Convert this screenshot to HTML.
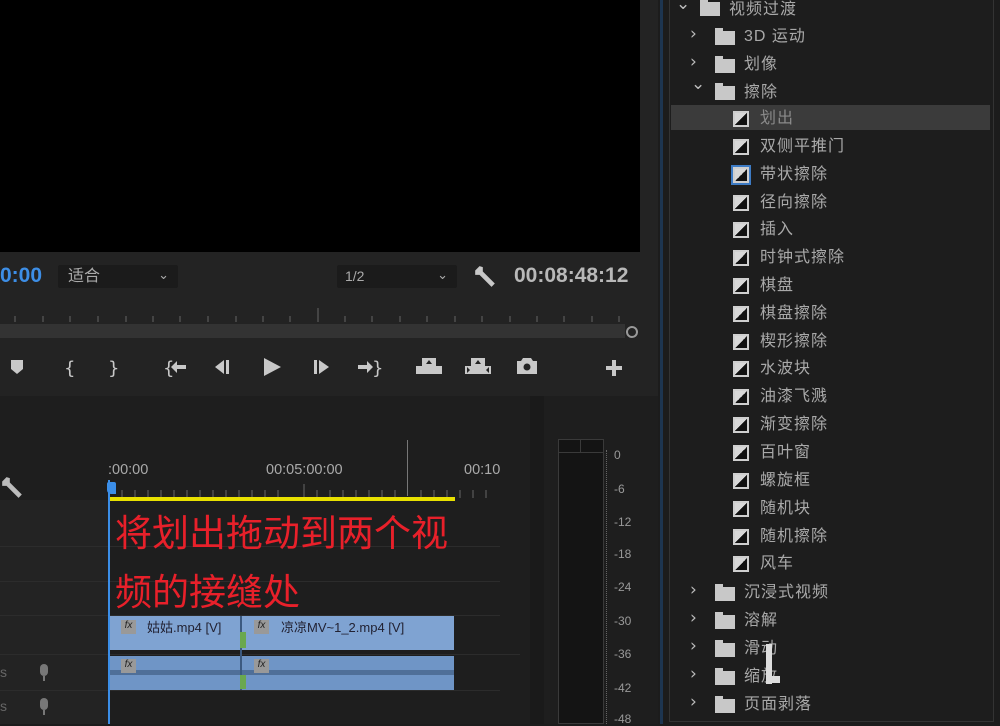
<!DOCTYPE html>
<html><head><meta charset="utf-8"><style>
*{margin:0;padding:0;box-sizing:border-box}
body{width:1000px;height:724px;overflow:hidden;background:#1c1c1c;position:relative;font-family:"Liberation Sans","Noto Sans CJK SC",sans-serif;color:#a8a8a8}
.a{position:absolute}
.row{position:absolute;height:28px;line-height:28px;font-size:16px;color:#a9a9a9;white-space:nowrap;letter-spacing:1px}
.ic{position:absolute;left:733px;width:16px;height:16px;border:2px solid #cfcfcf;background:linear-gradient(135deg,#d8d8d8 50%,#111 50%)}
.fd{position:absolute;width:20px;height:14px;background:#c8c8c8}
.fd:before{content:"";position:absolute;left:0;top:-3px;width:8px;height:3px;background:#c8c8c8}
.ch{position:absolute;font-size:17px;color:#bbb;font-family:"DejaVu Sans",sans-serif}
.lbl{position:absolute;left:614px;font-size:12px;color:#999}
</style></head><body>
<div class="a" style="left:0;top:0;width:658px;height:396px;background:#232323"></div>
<div class="a" style="left:0;top:0;width:640px;height:252px;background:#000"></div>
<div class="a" style="left:0;top:264px;font-size:21px;color:#3d8ee6;font-weight:bold">0:00</div>
<div class="a" style="left:58px;top:265px;width:120px;height:23px;background:#1b1b1b;border-radius:2px;font-size:16px;padding-left:10px;line-height:23px;color:#aaa">适合<span style="position:absolute;right:9px;top:-2px;font-size:13px">&#8964;</span></div>
<div class="a" style="left:337px;top:265px;width:120px;height:23px;background:#1b1b1b;border-radius:2px;font-size:14px;padding-left:8px;line-height:23px;color:#aaa">1/2<span style="position:absolute;right:9px;top:-2px;font-size:13px">&#8964;</span></div>
<svg class="a" style="left:473px;top:265px" width="24" height="24" viewBox="0 0 22 22"><path d="M2 5 L6 1 L9 2 L9 6 L20 17 L17 20 L6 9 L2 9 Z" fill="#c8c8c8"/></svg>
<div class="a" style="left:514px;top:264px;font-size:21px;font-weight:bold;color:#b8b8b8">00:08:48:12</div>
<div class="a" style="left:0;top:324px;width:625px;height:14px;background:#333"></div>
<svg class="a" style="left:0;top:306px" width="640" height="18">
<g stroke="#666" stroke-width="1">
<line x1="15" y1="10" x2="15" y2="16"/><line x1="43" y1="10" x2="43" y2="16"/><line x1="70" y1="10" x2="70" y2="16"/><line x1="98" y1="10" x2="98" y2="16"/><line x1="126" y1="10" x2="126" y2="16"/><line x1="153" y1="10" x2="153" y2="16"/><line x1="180" y1="10" x2="180" y2="16"/><line x1="208" y1="10" x2="208" y2="16"/><line x1="236" y1="10" x2="236" y2="16"/><line x1="263" y1="10" x2="263" y2="16"/><line x1="290" y1="10" x2="290" y2="16"/><line x1="318" y1="2" x2="318" y2="16"/><line x1="345" y1="10" x2="345" y2="16"/><line x1="372" y1="10" x2="372" y2="16"/><line x1="400" y1="10" x2="400" y2="16"/><line x1="427" y1="10" x2="427" y2="16"/><line x1="455" y1="10" x2="455" y2="16"/><line x1="482" y1="10" x2="482" y2="16"/><line x1="510" y1="10" x2="510" y2="16"/><line x1="537" y1="10" x2="537" y2="16"/><line x1="564" y1="10" x2="564" y2="16"/><line x1="592" y1="10" x2="592" y2="16"/><line x1="619" y1="10" x2="619" y2="16"/></g></svg>
<div class="a" style="left:626px;top:326px;width:12px;height:12px;border:2px solid #999;border-radius:50%"></div>
<svg class="a" style="left:0;top:352px" width="640" height="30" fill="#c8c8c8">
<path d="M11 8 H23 V17 L17 22 L11 17 Z"/>
<text x="64" y="22" font-size="18" fill="#c8c8c8" font-family="DejaVu Sans">{</text>
<text x="108" y="22" font-size="18" fill="#c8c8c8" font-family="DejaVu Sans">}</text>
<text x="163" y="22" font-size="18" fill="#c8c8c8" font-family="DejaVu Sans">{</text><path d="M171 15 L177 9 V13 H186 V17 H177 V21 Z"/>
<path d="M215 15 L224 8 V22 Z"/><rect x="226" y="8" width="3" height="14"/>
<path d="M264 6 L281 15 L264 24 Z"/>
<rect x="314" y="8" width="3" height="14"/><path d="M319 8 L329 15 L319 22 Z"/>
<path d="M358 13 H367 V9 L373 15 L367 21 V17 H358 Z"/><text x="372" y="22" font-size="18" fill="#c8c8c8" font-family="DejaVu Sans">}</text>
<path d="M422 6 H436 V14 H442 V22 H416 V14 H422 Z"/><path d="M426 12 L429 8 L432 12 Z" fill="#232323"/>
<path d="M471 6 H485 V14 H491 V22 H465 V14 H471 Z"/><path d="M475 12 L478 8 L481 12 Z" fill="#232323"/><path d="M467 15 L470 18 L467 21Z M489 15 L486 18 L489 21Z" fill="#232323"/>
<path d="M517 9 H521 L523 6 H531 L533 9 H537 V22 H517 Z"/><circle cx="527" cy="15" r="3.5" fill="#232323"/>
<rect x="606" y="14" width="16" height="4"/><rect x="612" y="8" width="4" height="16"/>
</svg>
<div class="a" style="left:0;top:396px;width:658px;height:328px;background:#1e1e1e"></div>
<div class="a" style="left:0;top:500px;width:108px;height:224px;background:#232323"></div>
<div class="a" style="left:530px;top:396px;width:14px;height:328px;background:#1a1a1a"></div>
<svg class="a" style="left:0;top:476px" width="24" height="24" viewBox="0 0 22 22"><path d="M2 5 L6 1 L9 2 L9 6 L20 17 L17 20 L6 9 L2 9 Z" fill="#bbb"/></svg>
<div class="a" style="left:108px;top:462px;font-size:14.5px;color:#aaa">:00:00</div>
<div class="a" style="left:266px;top:462px;font-size:14.5px;color:#aaa">00:05:00:00</div>
<div class="a" style="left:464px;top:462px;font-size:14.5px;color:#aaa">00:10</div>
<div class="a" style="left:407px;top:440px;width:1px;height:56px;background:#777"></div>
<svg class="a" style="left:108px;top:484px" width="385" height="14"><g stroke="#666">
<line x1="14" y1="6" x2="14" y2="14"/><line x1="27" y1="6" x2="27" y2="14"/><line x1="40" y1="6" x2="40" y2="14"/><line x1="53" y1="6" x2="53" y2="14"/><line x1="66" y1="6" x2="66" y2="14"/><line x1="79" y1="6" x2="79" y2="14"/><line x1="92" y1="6" x2="92" y2="14"/><line x1="105" y1="6" x2="105" y2="14"/><line x1="118" y1="6" x2="118" y2="14"/><line x1="131" y1="6" x2="131" y2="14"/><line x1="144" y1="6" x2="144" y2="14"/><line x1="157" y1="6" x2="157" y2="14"/><line x1="170" y1="6" x2="170" y2="14"/><line x1="196" y1="0" x2="196" y2="14"/><line x1="209" y1="6" x2="209" y2="14"/><line x1="222" y1="6" x2="222" y2="14"/><line x1="235" y1="6" x2="235" y2="14"/><line x1="248" y1="6" x2="248" y2="14"/><line x1="261" y1="6" x2="261" y2="14"/><line x1="274" y1="6" x2="274" y2="14"/><line x1="287" y1="6" x2="287" y2="14"/><line x1="313" y1="6" x2="313" y2="14"/><line x1="326" y1="6" x2="326" y2="14"/><line x1="339" y1="6" x2="339" y2="14"/><line x1="352" y1="6" x2="352" y2="14"/><line x1="365" y1="6" x2="365" y2="14"/><line x1="378" y1="6" x2="378" y2="14"/></g></svg>
<div class="a" style="left:108px;top:497px;width:347px;height:4px;background:#e8e000"></div>
<div class="a" style="left:0;top:546px;width:500px;height:1px;background:#2c2c2c"></div>
<div class="a" style="left:0;top:581px;width:500px;height:1px;background:#2c2c2c"></div>
<div class="a" style="left:0;top:615px;width:500px;height:1px;background:#2c2c2c"></div>
<div class="a" style="left:0;top:654px;width:520px;height:1px;background:#2c2c2c"></div>
<div class="a" style="left:0;top:690px;width:500px;height:1px;background:#2c2c2c"></div>
<div class="a" style="left:108px;top:616px;width:346px;height:34px;background:#7fa3d2"></div>
<div class="a" style="left:108px;top:656px;width:346px;height:34px;background:#6f95c6"></div>
<div class="a" style="left:108px;top:670px;width:346px;height:5px;background:#4f6f98"></div>
<div class="a" style="left:240px;top:616px;width:2px;height:74px;background:#3c5a80"></div>
<div class="a" style="left:240px;top:632px;width:6px;height:16px;background:#6aa84f"></div>
<div class="a" style="left:240px;top:675px;width:6px;height:14px;background:#6aa84f"></div>
<div class="a" style="left:121px;top:620px;width:15px;height:14px;background:#999;font-size:10px;color:#222;text-align:center;font-style:italic">fx</div>
<div class="a" style="left:254px;top:620px;width:15px;height:14px;background:#999;font-size:10px;color:#222;text-align:center;font-style:italic">fx</div>
<div class="a" style="left:121px;top:659px;width:15px;height:14px;background:#999;font-size:10px;color:#222;text-align:center;font-style:italic">fx</div>
<div class="a" style="left:254px;top:659px;width:15px;height:14px;background:#999;font-size:10px;color:#222;text-align:center;font-style:italic">fx</div>
<div class="a" style="left:147px;top:617px;font-size:13px;color:#223">姑姑.mp4 [V]</div>
<div class="a" style="left:281px;top:617px;font-size:13px;color:#223">凉凉MV~1_2.mp4 [V]</div>
<div class="a" style="left:108px;top:480px;width:2px;height:244px;background:#3b8ee8"></div>
<div class="a" style="left:107px;top:482px;width:9px;height:12px;background:#3b8ee8;border-radius:2px 2px 0 4px"></div>
<div class="a" style="left:115px;top:504px;font-size:37px;color:#e8202a;font-family:'Noto Sans CJK SC',sans-serif;line-height:52px">将划出拖动到两个视</div>
<div class="a" style="left:115px;top:563px;font-size:37px;color:#e8202a;font-family:'Noto Sans CJK SC',sans-serif;line-height:52px">频的接缝处</div>
<div class="a" style="left:0;top:664px;font-size:14px;color:#666">s</div>
<div class="a" style="left:0;top:698px;font-size:14px;color:#666">s</div>
<svg class="a" style="left:36px;top:662px" width="16" height="62" fill="#777"><rect x="4" y="2" width="8" height="12" rx="4"/><rect x="7" y="14" width="2" height="5"/><rect x="4" y="36" width="8" height="12" rx="4"/><rect x="7" y="48" width="2" height="5"/></svg>
<div class="a" style="left:558px;top:439px;width:46px;height:285px;background:#141414;border:1px solid #3a3a3a"></div>
<div class="a" style="left:558px;top:439px;width:46px;height:14px;border:1px solid #3a3a3a"></div>
<div class="a" style="left:580px;top:439px;width:1px;height:14px;background:#3a3a3a"></div>
<div class="a" style="left:606px;top:450px;width:1px;height:274px;border-left:1px dotted #666"></div>
<div class="lbl" style="top:448px">0</div><div class="lbl" style="top:482px">-6</div><div class="lbl" style="top:515px">-12</div><div class="lbl" style="top:547px">-18</div><div class="lbl" style="top:580px">-24</div><div class="lbl" style="top:614px">-30</div><div class="lbl" style="top:647px">-36</div><div class="lbl" style="top:681px">-42</div><div class="lbl" style="top:712px">-48</div>
<div class="a" style="left:660px;top:0;width:3px;height:724px;background:#1d3550"></div>
<div class="a" style="left:669px;top:-2px;width:325px;height:724px;border:1px solid #333;background:#1d1d1d"></div>
<div class="a" style="left:671px;top:105px;width:319px;height:25px;background:#3b3b3b"></div>
<span class="ch" style="left:676px;top:-6px">&#8964;</span><div class="fd" style="left:700px;top:2px"></div><div class="row" style="left:729px;top:-4px">视频过渡</div>
<span class="ch" style="left:690px;top:24px">&#8250;</span><div class="fd" style="left:715px;top:31px"></div><div class="row" style="left:744px;top:23px">3D 运动</div>
<span class="ch" style="left:690px;top:52px">&#8250;</span><div class="fd" style="left:715px;top:59px"></div><div class="row" style="left:744px;top:51px">划像</div>
<span class="ch" style="left:691px;top:74px">&#8964;</span><div class="fd" style="left:715px;top:86px"></div><div class="row" style="left:744px;top:79px">擦除</div>
<div class="ic" style="top:111px"></div><div class="row" style="left:760px;top:105px;color:#8a8a8a">划出</div>
<div class="ic" style="top:139px"></div><div class="row" style="left:760px;top:133px">双侧平推门</div>
<div class="ic" style="top:167px;box-shadow:0 0 0 2px #3d7bc4"></div><div class="row" style="left:760px;top:161px">带状擦除</div>
<div class="ic" style="top:195px"></div><div class="row" style="left:760px;top:189px">径向擦除</div>
<div class="ic" style="top:222px"></div><div class="row" style="left:760px;top:216px">插入</div>
<div class="ic" style="top:250px"></div><div class="row" style="left:760px;top:244px">时钟式擦除</div>
<div class="ic" style="top:278px"></div><div class="row" style="left:760px;top:272px">棋盘</div>
<div class="ic" style="top:306px"></div><div class="row" style="left:760px;top:300px">棋盘擦除</div>
<div class="ic" style="top:334px"></div><div class="row" style="left:760px;top:328px">楔形擦除</div>
<div class="ic" style="top:361px"></div><div class="row" style="left:760px;top:355px">水波块</div>
<div class="ic" style="top:389px"></div><div class="row" style="left:760px;top:383px">油漆飞溅</div>
<div class="ic" style="top:417px"></div><div class="row" style="left:760px;top:411px">渐变擦除</div>
<div class="ic" style="top:445px"></div><div class="row" style="left:760px;top:439px">百叶窗</div>
<div class="ic" style="top:473px"></div><div class="row" style="left:760px;top:467px">螺旋框</div>
<div class="ic" style="top:501px"></div><div class="row" style="left:760px;top:495px">随机块</div>
<div class="ic" style="top:529px"></div><div class="row" style="left:760px;top:523px">随机擦除</div>
<div class="ic" style="top:556px"></div><div class="row" style="left:760px;top:550px">风车</div>
<span class="ch" style="left:690px;top:580px">&#8250;</span><div class="fd" style="left:715px;top:587px"></div><div class="row" style="left:744px;top:579px">沉浸式视频</div>
<span class="ch" style="left:690px;top:608px">&#8250;</span><div class="fd" style="left:715px;top:615px"></div><div class="row" style="left:744px;top:607px">溶解</div>
<span class="ch" style="left:690px;top:636px">&#8250;</span><div class="fd" style="left:715px;top:643px"></div><div class="row" style="left:744px;top:635px">滑动</div>
<span class="ch" style="left:690px;top:664px">&#8250;</span><div class="fd" style="left:715px;top:671px"></div><div class="row" style="left:744px;top:663px">缩放</div>
<span class="ch" style="left:690px;top:692px">&#8250;</span><div class="fd" style="left:715px;top:699px"></div><div class="row" style="left:744px;top:691px">页面剥落</div>
<div class="a" style="left:766px;top:644px;width:6px;height:40px;background:#ddd"></div>
<div class="a" style="left:766px;top:676px;width:14px;height:7px;background:#ddd"></div>
</body></html>
